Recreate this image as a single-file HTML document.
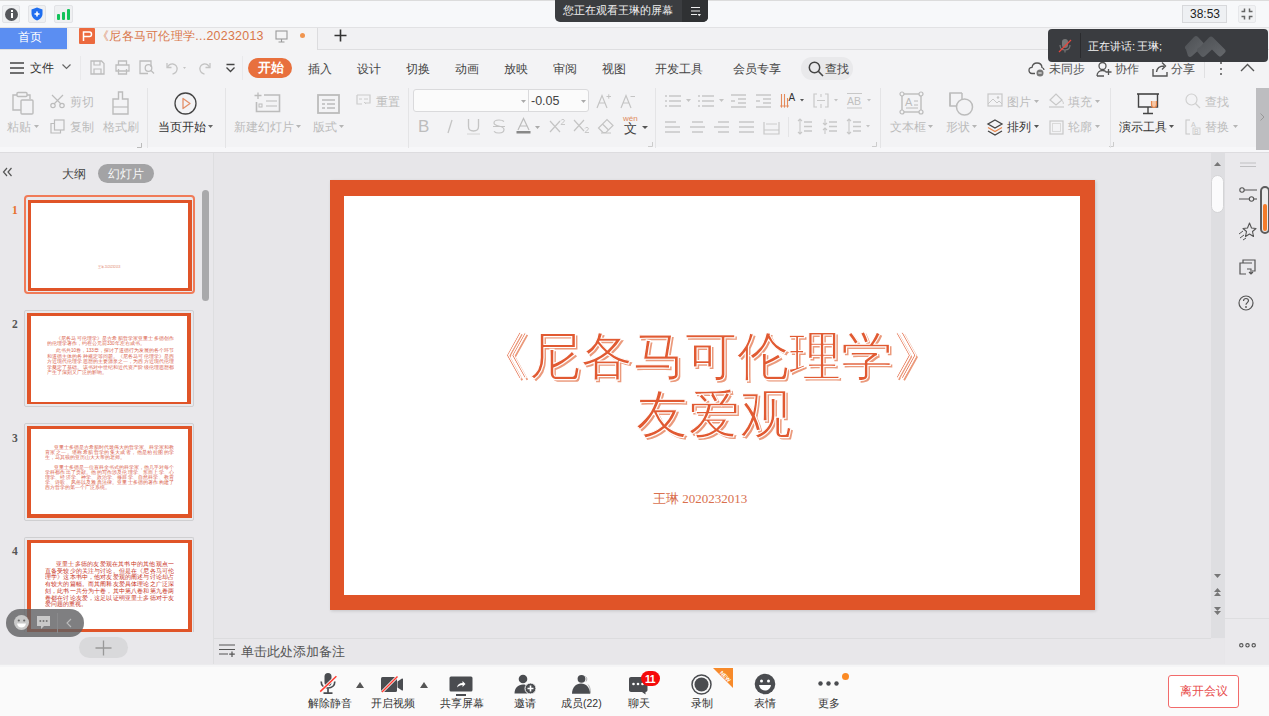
<!DOCTYPE html>
<html><head><meta charset="utf-8">
<style>
*{box-sizing:border-box;margin:0;padding:0}
html,body{width:1269px;height:716px;overflow:hidden;background:#e7e6e9;font-family:"Liberation Sans",sans-serif;color:#333}
.a{position:absolute}
.t{position:absolute;white-space:nowrap;line-height:1}
svg{position:absolute;overflow:visible}
</style></head><body>

<!-- top bar -->
<div class="a" style="left:0;top:0;width:1269px;height:27px;background:#f7f8fa;border-top:1px solid #dcdcdc"></div>
<div class="a" style="left:2px;top:5px;width:18px;height:18px;border:1px solid #e2e3e6;background:#eff0f2;border-radius:2px"></div>
<div class="a" style="left:5px;top:7.5px;width:13px;height:13px;background:#55575b;border-radius:50%"></div>
<div class="a" style="left:10.6px;top:9.5px;width:2px;height:2px;background:#fff"></div>
<div class="a" style="left:10.6px;top:12.5px;width:2px;height:5px;background:#fff"></div>
<div class="a" style="left:28px;top:5px;width:18px;height:18px;border:1px solid #e2e3e6;background:#eff0f2;border-radius:2px"></div>
<svg style="left:31px;top:7px" width="12" height="14" viewBox="0 0 12 14"><path d="M6 0.5 L11.5 2.5 V7 C11.5 10 9 12.3 6 13.5 C3 12.3 0.5 10 0.5 7 V2.5 Z" fill="#1f6ef0"/><path d="M6 4.5V9.5M3.5 7H8.5" stroke="#fff" stroke-width="1.6"/></svg>
<div class="a" style="left:54px;top:5px;width:19px;height:18px;border:1px solid #e2e3e6;background:#eff0f2;border-radius:2px"></div>
<div class="a" style="left:57px;top:14px;width:2.6px;height:5.5px;background:#12c25a;border-radius:1px"></div>
<div class="a" style="left:62px;top:11.5px;width:2.6px;height:8px;background:#12c25a;border-radius:1px"></div>
<div class="a" style="left:67px;top:9px;width:2.6px;height:10.5px;background:#12c25a;border-radius:1px"></div>

<!-- screen pill -->
<div class="a" style="left:555px;top:0;width:153px;height:22px;background:#3b3d40;border-radius:0 0 5px 5px"></div>
<div class="a" style="left:682px;top:0;width:26px;height:22px;background:#2f3133;border-radius:0 0 5px 0"></div>
<div class="t" style="left:563px;top:5px;font-size:11.4px;color:#f2f2f2">您正在观看王琳的屏幕</div>
<svg style="left:690px;top:6px" width="12" height="11"><path d="M1 1.5H10M1 5H10M1 8.5H7" stroke="#eee" stroke-width="1.2"/><path d="M7.5 8 L11 8 L9.25 10.2Z" fill="#eee"/></svg>

<!-- timer -->
<div class="a" style="left:1182px;top:5px;width:45px;height:18px;border:1px solid #d7d8db;background:#eef0f3"></div>
<div class="t" style="left:1190px;top:8px;font-size:12px;color:#222">38:53</div>
<div class="a" style="left:1238px;top:5px;width:18px;height:18px;border:1px solid #e6e7ea;background:#f1f2f4;border-radius:2px"></div>
<svg style="left:1240px;top:7px" width="14" height="14"><path d="M4.5 1.5V4.5H1.5M9.5 1.5V4.5H12.5M4.5 12.5V9.5H1.5M9.5 12.5V9.5H12.5" stroke="#666" stroke-width="1.5" fill="none"/></svg>

<!-- tab bar -->
<div class="a" style="left:0;top:27px;width:1269px;height:23px;background:#f1f1f3;border-top:1px solid #e2e2e4;border-bottom:1px solid #dedee0"></div>
<div class="a" style="left:0;top:28px;width:67px;height:21px;background:#5b8ef2"></div>
<div class="t" style="left:18px;top:31px;font-size:12px;color:#fff">首页</div>
<div class="a" style="left:67px;top:28px;width:251px;height:22px;background:#f4f4f5;border-left:2px solid #f0f0f2;border-right:1px solid #dcdcde"></div>
<div class="a" style="left:79px;top:28px;width:16px;height:16px;background:#ec6a3e;border-radius:1px"></div>
<svg style="left:79px;top:28px" width="16" height="16"><path d="M4.5 13V4H10.5C12 4 12.5 5 12.5 6.3C12.5 7.6 12 8.6 10.5 8.6H4.5" stroke="#fff" stroke-width="1.5" fill="none"/></svg>
<div class="t" style="left:97px;top:30px;font-size:12.4px;letter-spacing:0.28px;color:#d9774a">《尼各马可伦理学...20232013</div>
<svg style="left:275px;top:30px" width="13" height="13"><rect x="1" y="1" width="11" height="8" fill="none" stroke="#9a9a9a" stroke-width="1.1"/><path d="M6.5 9V12M3.5 12H9.5" stroke="#9a9a9a" stroke-width="1.1"/></svg>
<div class="a" style="left:300px;top:33px;width:5px;height:5px;background:#f0954f;border-radius:50%"></div>
<svg style="left:334px;top:29px" width="13" height="13"><path d="M6.5 0.5V12.5M0.5 6.5H12.5" stroke="#333" stroke-width="1.6"/></svg>

<!-- menu + ribbon -->
<div class="a" style="left:0;top:50px;width:1269px;height:97px;background:#f3f3f5"></div><div class="a" style="left:0;top:147px;width:1269px;height:5px;background:#f7f7f9"></div><div class="a" style="left:0;top:152px;width:1269px;height:1px;background:#dddcdf"></div>
<svg style="left:10px;top:62px" width="14" height="12"><path d="M0 1H14M0 6H14M0 11H14" stroke="#444" stroke-width="1.4"/></svg>
<div class="t" style="left:30px;top:62px;font-size:12px;color:#333">文件</div>
<svg style="left:62px;top:64px" width="9" height="6"><path d="M0.5 0.5L4.5 4.5L8.5 0.5" stroke="#666" stroke-width="1.2" fill="none"/></svg>
<div class="a" style="left:80px;top:56px;width:1px;height:24px;background:#e9e9eb"></div>
<svg style="left:90px;top:60px" width="15" height="15"><path d="M1 1H11.5L14 3.5V14H1Z" fill="none" stroke="#bdbdbd" stroke-width="1.3"/><path d="M4 1V5H10V1M4 14V9H11V14" fill="none" stroke="#bdbdbd" stroke-width="1.2"/></svg>
<svg style="left:115px;top:60px" width="15" height="15"><path d="M3.5 4.5V1H11.5V4.5M1 5H14V11H1ZM3.5 9V14H11.5V9" fill="none" stroke="#bdbdbd" stroke-width="1.3"/></svg>
<svg style="left:139px;top:60px" width="16" height="15"><path d="M9 13.5H1V1H12V7" fill="none" stroke="#bdbdbd" stroke-width="1.3"/><circle cx="9.5" cy="8" r="3.3" fill="none" stroke="#bdbdbd" stroke-width="1.3"/><path d="M12 10.5L15 13.5" stroke="#bdbdbd" stroke-width="1.3"/></svg>
<svg style="left:165px;top:61px" width="22" height="14"><path d="M2 2V6.5H6.5" fill="none" stroke="#c4c4c4" stroke-width="1.3"/><path d="M2.5 6C3.8 3.8 5.8 2.8 7.8 3C10.8 3.3 12.5 5.8 12 8.7C11.6 11 10 12.5 7.5 13.2" fill="none" stroke="#c4c4c4" stroke-width="1.3"/><path d="M18 6L21 6L19.5 8Z" fill="#c4c4c4"/></svg>
<svg style="left:198px;top:61px" width="14" height="14"><path d="M12 2V6.5H7.5" fill="none" stroke="#c4c4c4" stroke-width="1.3"/><path d="M11.5 6C10.2 3.8 8.2 2.8 6.2 3C3.2 3.3 1.5 5.8 2 8.7C2.4 11 4 12.5 6.5 13.2" fill="none" stroke="#c4c4c4" stroke-width="1.3"/></svg>
<svg style="left:226px;top:64px" width="9" height="9"><path d="M0.5 0.5H8.5M0.5 3.5L4.5 7.5L8.5 3.5" fill="none" stroke="#444" stroke-width="1.3"/></svg>
<div class="a" style="left:242px;top:56px;width:1px;height:24px;background:#e9e9eb"></div>
<div class="a" style="left:248px;top:58px;width:44px;height:20px;background:#e8703d;border-radius:10px"></div>
<div class="t" style="left:258px;top:62px;font-size:12.5px;color:#fff;font-weight:bold">开始</div>
<div class="t" style="left:308px;top:63px;font-size:12px;color:#444">插入</div>
<div class="t" style="left:357px;top:63px;font-size:12px;color:#444">设计</div>
<div class="t" style="left:406px;top:63px;font-size:12px;color:#444">切换</div>
<div class="t" style="left:455px;top:63px;font-size:12px;color:#444">动画</div>
<div class="t" style="left:504px;top:63px;font-size:12px;color:#444">放映</div>
<div class="t" style="left:553px;top:63px;font-size:12px;color:#444">审阅</div>
<div class="t" style="left:602px;top:63px;font-size:12px;color:#444">视图</div>
<div class="t" style="left:655px;top:63px;font-size:12px;color:#444">开发工具</div>
<div class="t" style="left:733px;top:63px;font-size:12px;color:#444">会员专享</div>
<div class="a" style="left:801px;top:57px;width:52px;height:23px;background:#e9e9eb;border-radius:11px"></div>
<svg style="left:808px;top:61px" width="16" height="16"><circle cx="6.5" cy="6.5" r="5.2" fill="none" stroke="#444" stroke-width="1.5"/><path d="M10.3 10.3L15 15" stroke="#444" stroke-width="1.6"/></svg>
<div class="t" style="left:825px;top:63px;font-size:12px;color:#444">查找</div>

<!-- ribbon -->
<!-- paste -->
<svg style="left:11px;top:91px" width="23" height="24"><path d="M6 4H2V19H10" fill="none" stroke="#bcbcbc" stroke-width="1.4"/><path d="M16 4H19V8" fill="none" stroke="#bcbcbc" stroke-width="1.4"/><rect x="6" y="1.5" width="10" height="4" rx="1" fill="none" stroke="#bcbcbc" stroke-width="1.4"/><rect x="10" y="9" width="12" height="14" rx="1" fill="none" stroke="#bcbcbc" stroke-width="1.4"/></svg>
<div class="t" style="left:7px;top:121px;font-size:12px;color:#bcbcbc">粘贴</div>
<svg style="left:34px;top:125px" width="5" height="3"><path d="M0 0H5L2.5 3Z" fill="#b5b5b5"/></svg>
<svg style="left:50px;top:94px" width="15" height="14"><path d="M2 1L11 10M13 1L4 10" stroke="#bcbcbc" stroke-width="1.2"/><circle cx="3" cy="11.5" r="2.2" fill="none" stroke="#bcbcbc" stroke-width="1.2"/><circle cx="12" cy="11.5" r="2.2" fill="none" stroke="#bcbcbc" stroke-width="1.2"/></svg>
<div class="t" style="left:70px;top:96px;font-size:12px;color:#bcbcbc">剪切</div>
<svg style="left:50px;top:119px" width="15" height="15"><path d="M4.5 4.5H1V14H10.5V11" fill="none" stroke="#bcbcbc" stroke-width="1.2"/><rect x="4.5" y="1" width="9.5" height="10" fill="none" stroke="#bcbcbc" stroke-width="1.2"/></svg>
<div class="t" style="left:70px;top:121px;font-size:12px;color:#bcbcbc">复制</div>
<svg style="left:111px;top:91px" width="19" height="24"><path d="M7.5 1H11.5V8H17V23H2V8H7.5Z" fill="none" stroke="#bcbcbc" stroke-width="1.4"/><path d="M2 16H17" stroke="#bcbcbc" stroke-width="1.2"/></svg>
<div class="t" style="left:103px;top:121px;font-size:12px;color:#bcbcbc">格式刷</div>
<svg style="left:137px;top:143px" width="5" height="5"><path d="M4.5 0V4.5H0" fill="none" stroke="#bbb" stroke-width="1"/></svg>
<div class="a" style="left:147px;top:88px;width:1px;height:60px;background:#e4e4e6"></div>
<svg style="left:174px;top:92px" width="23" height="23"><circle cx="11.5" cy="11.5" r="10.5" fill="none" stroke="#444" stroke-width="1.3"/><path d="M9 6.5L16 11.5L9 16.5Z" fill="none" stroke="#e39069" stroke-width="1.3" stroke-linejoin="round"/></svg>
<div class="t" style="left:158px;top:121px;font-size:12px;color:#333">当页开始</div>
<svg style="left:208px;top:125px" width="5" height="3"><path d="M0 0H5L2.5 3Z" fill="#666"/></svg>
<div class="a" style="left:225px;top:88px;width:1px;height:60px;background:#e4e4e6"></div>
<!-- new slide -->
<svg style="left:254px;top:92px" width="27" height="21"><path d="M4 0.5V7M0.5 3.5H7.5" stroke="#bcbcbc" stroke-width="1.3"/><path d="M10 3H25.5V19.5H2.5V10" fill="none" stroke="#bcbcbc" stroke-width="1.6"/><rect x="5" y="12" width="3" height="3" fill="none" stroke="#bcbcbc" stroke-width="1"/><path d="M12 9H23M12 14H23" stroke="#bcbcbc" stroke-width="1.2"/></svg>
<div class="t" style="left:234px;top:121px;font-size:12px;color:#bcbcbc">新建幻灯片</div>
<svg style="left:296px;top:125px" width="5" height="3"><path d="M0 0H5L2.5 3Z" fill="#b5b5b5"/></svg>
<svg style="left:317px;top:94px" width="23" height="20"><rect x="1" y="1" width="21" height="18" fill="none" stroke="#bcbcbc" stroke-width="1.8"/><path d="M5 6H18M5 10H8M10 10H18M5 14H8M10 14H18" stroke="#bcbcbc" stroke-width="1.3"/></svg>
<div class="t" style="left:313px;top:121px;font-size:12px;color:#bcbcbc">版式</div>
<svg style="left:339px;top:125px" width="5" height="3"><path d="M0 0H5L2.5 3Z" fill="#b5b5b5"/></svg>
<svg style="left:356px;top:94px" width="15" height="13"><path d="M1 1H14V9H9" fill="none" stroke="#ccc" stroke-width="1.2"/><path d="M1 1V10H6" fill="none" stroke="#ccc" stroke-width="1.2"/><path d="M3 5H6M8 5H12M8 8L10 10" stroke="#ccc" stroke-width="1"/></svg>
<div class="t" style="left:376px;top:96px;font-size:12px;color:#bcbcbc">重置</div>
<div class="a" style="left:408px;top:88px;width:1px;height:60px;background:#e4e4e6"></div>
<!-- font boxes -->
<div class="a" style="left:413px;top:89px;width:176px;height:23px;background:#fbfbfb;border:1px solid #dadadc;border-radius:3px"></div>
<div class="a" style="left:528px;top:90px;width:1px;height:21px;background:#dadadc"></div>
<svg style="left:521px;top:100px" width="5" height="3"><path d="M0 0H5L2.5 3Z" fill="#aaa"/></svg>
<svg style="left:581px;top:100px" width="5" height="3"><path d="M0 0H5L2.5 3Z" fill="#aaa"/></svg>
<div class="t" style="left:531px;top:95px;font-size:12.5px;color:#444">-0.05</div>
<svg style="left:596px;top:93px" width="16" height="16"><path d="M1 15L6 2.5L11 15M3 10H9" fill="none" stroke="#c4c4c4" stroke-width="1.2"/><path d="M10.5 3.5H15M12.75 1.3V5.7" stroke="#c4c4c4" stroke-width="1"/></svg>
<svg style="left:620px;top:93px" width="16" height="16"><path d="M1 15L6 2.5L11 15M3 10H9" fill="none" stroke="#c4c4c4" stroke-width="1.2"/><path d="M10.5 3.5H15" stroke="#c4c4c4" stroke-width="1"/></svg>
<div class="t" style="left:418px;top:118px;font-size:17px;color:#bdbdbd">B</div>
<svg style="left:446px;top:119px" width="8" height="15"><path d="M6 1L2 14" stroke="#c4c4c4" stroke-width="1.3"/></svg>
<svg style="left:466px;top:118px" width="15" height="17"><path d="M2.5 1V8.5C2.5 11.5 4.5 13 7.5 13C10.5 13 12.5 11.5 12.5 8.5V1" fill="none" stroke="#c4c4c4" stroke-width="1.3"/><path d="M1 16H14" stroke="#d4d4d4" stroke-width="1"/></svg>
<svg style="left:492px;top:119px" width="14" height="15"><path d="M12 2.5C11 1.5 9.5 1 7 1C4 1 2 2 2 4C2 8 12 6 12 10.5C12 12.5 10 14 7 14C4.5 14 3 13.3 2 12.3M1 7.5H13" fill="none" stroke="#c4c4c4" stroke-width="1.2"/></svg>
<svg style="left:516px;top:117px" width="15" height="17"><path d="M2 13L7.5 1.5L13 13M4 9H11" fill="none" stroke="#bcbcbc" stroke-width="1.2"/><rect x="0.5" y="14" width="14" height="2.5" fill="#888"/></svg>
<svg style="left:535px;top:126px" width="5" height="3"><path d="M0 0H5L2.5 3Z" fill="#aaa"/></svg>
<svg style="left:549px;top:118px" width="17" height="16"><path d="M1 3L11 14M11 3L1 14" stroke="#c4c4c4" stroke-width="1.2"/><path d="M12 2.5C12.5 1 15.5 1 15.5 2.8C15.5 4 12 5.5 12 6.5H16" fill="none" stroke="#c4c4c4" stroke-width="0.9"/></svg>
<svg style="left:573px;top:118px" width="17" height="16"><path d="M1 2L11 13M11 2L1 13" stroke="#c4c4c4" stroke-width="1.2"/><path d="M12 10.5C12.5 9 15.5 9 15.5 10.8C15.5 12 12 13.5 12 14.5H16" fill="none" stroke="#c4c4c4" stroke-width="0.9"/></svg>
<svg style="left:597px;top:117px" width="18" height="17"><path d="M6 15.5L1.5 11L10 2.5L16 8.5L9 15.5Z M5.5 7L11 12.5" fill="none" stroke="#c4c4c4" stroke-width="1.2"/><path d="M4 16H14" stroke="#c4c4c4" stroke-width="1"/></svg>
<div class="t" style="left:623px;top:115px;font-size:8px;color:#e08a5a">wén</div>
<div class="t" style="left:624px;top:122px;font-size:13px;color:#444">文</div>
<svg style="left:642px;top:126px" width="6" height="3"><path d="M0 0H6L3 3Z" fill="#555"/></svg>
<svg style="left:648px;top:142px" width="5" height="5"><path d="M4.5 0V4.5H0" fill="none" stroke="#ccc" stroke-width="1"/></svg>
<div class="a" style="left:655px;top:88px;width:1px;height:60px;background:#e4e4e6"></div>
<svg style="left:665px;top:93px" width="17" height="16"><path d="M0 3H2M4 3H16M0 8H2M4 8H16M0 13H2M4 13H16" stroke="#c8c8c8" stroke-width="1.3"/></svg><svg style="left:686px;top:99px" width="5" height="3"><path d="M0 0H5L2.5 3Z" fill="#c4c4c4"/></svg><svg style="left:698px;top:93px" width="17" height="16"><path d="M0 3H2M4 3H16M0 8H2M4 8H16M0 13H2M4 13H16" stroke="#c8c8c8" stroke-width="1.3"/></svg><svg style="left:719px;top:99px" width="5" height="3"><path d="M0 0H5L2.5 3Z" fill="#c4c4c4"/></svg><svg style="left:731px;top:93px" width="17" height="16"><path d="M0 2H15M7 6H15M7 10H15M0 14H15M0 8H4" stroke="#c8c8c8" stroke-width="1.3"/></svg><svg style="left:756px;top:93px" width="17" height="16"><path d="M0 2H15M7 6H15M7 10H15M0 14H15M0 8H4" stroke="#c8c8c8" stroke-width="1.3"/></svg><svg style="left:780px;top:92px" width="24" height="18"><path d="M1.5 2V15M4.5 2V15M7.5 6V15" stroke="#e58a5a" stroke-width="1.1"/><path d="M0 13.5L1.5 16L3 13.5M3 13.5L4.5 16L6 13.5M6 13.5L7.5 16L9 13.5" fill="#e58a5a"/><text x="8.5" y="9" font-size="10" font-family="Liberation Sans" fill="#333">A</text><path d="M20 7H24L22 9.5Z" fill="#555"/></svg>
<svg style="left:813px;top:92px" width="27" height="18"><path d="M4 2H1V15H4M12 2H15V15H12" fill="none" stroke="#c8c8c8" stroke-width="1.2"/><path d="M4 8.5H12M8 2V5M8 12V16" stroke="#c8c8c8" stroke-width="1.1"/><path d="M21 7H25L23 9.5Z" fill="#c4c4c4"/></svg>
<svg style="left:846px;top:92px" width="27" height="18"><path d="M1 1.5H16M1 16H16" stroke="#c8c8c8" stroke-width="1.1"/><text x="1" y="13" font-size="10.5" font-family="Liberation Sans" fill="#c0c0c0">AB</text><path d="M21 7H25L23 9.5Z" fill="#c4c4c4"/></svg>
<svg style="left:665px;top:119px" width="17" height="16"><path d="M0 3H11M0 8H15M0 13H15" stroke="#c8c8c8" stroke-width="1.3"/></svg><svg style="left:690px;top:119px" width="17" height="16"><path d="M2 3H13M0 8H15M2 13H13" stroke="#c8c8c8" stroke-width="1.3"/></svg><svg style="left:714px;top:119px" width="17" height="16"><path d="M4 3H15M0 8H15M4 13H15" stroke="#c8c8c8" stroke-width="1.3"/></svg><svg style="left:739px;top:119px" width="17" height="16"><path d="M0 3H15M0 8H15M0 13H15" stroke="#c8c8c8" stroke-width="1.3"/></svg><svg style="left:763px;top:119px" width="17" height="16"><path d="M1 3V15H16V3M1 11H16" fill="none" stroke="#c8c8c8" stroke-width="1.2"/><path d="M3 5H14" stroke="#c8c8c8" stroke-width="0.9"/></svg><div class="a" style="left:788px;top:117px;width:1px;height:20px;background:#e4e4e6"></div><svg style="left:797px;top:118px" width="16" height="17"><path d="M3 1V16M1 3L3 1L5 3M1 14L3 16L5 14" fill="none" stroke="#c8c8c8" stroke-width="1.1"/><path d="M7 4H15M7 8.5H15M7 13H15" stroke="#c8c8c8" stroke-width="1.3"/></svg><svg style="left:822px;top:118px" width="16" height="17"><path d="M3 1V7M1 5L3 7L5 5M3 10V16M1 12L3 10L5 12" fill="none" stroke="#c8c8c8" stroke-width="1.1"/><path d="M7 4H15M7 8.5H15M7 13H15" stroke="#c8c8c8" stroke-width="1.3"/></svg><svg style="left:846px;top:118px" width="28" height="17"><path d="M3 1V16M1 3L3 1L5 3M1 14L3 16L5 14" fill="none" stroke="#c8c8c8" stroke-width="1.1"/><path d="M7 4H15M7 8.5H15M7 13H15" stroke="#c8c8c8" stroke-width="1.3"/><path d="M20 7H24L22 9.5Z" fill="#c4c4c4"/></svg><svg style="left:872px;top:142px" width="5" height="5"><path d="M4.5 0V4.5H0" fill="none" stroke="#ccc" stroke-width="1"/></svg><div class="a" style="left:880px;top:88px;width:1px;height:60px;background:#e4e4e6"></div>
<svg style="left:899px;top:91px" width="25" height="24"><rect x="3" y="3" width="19" height="18" fill="none" stroke="#bcbcbc" stroke-width="1.4"/><circle cx="3" cy="3" r="2" fill="#f4f4f5" stroke="#bcbcbc" stroke-width="1.2"/><circle cx="22" cy="3" r="2" fill="#f4f4f5" stroke="#bcbcbc" stroke-width="1.2"/><circle cx="3" cy="21" r="2" fill="#f4f4f5" stroke="#bcbcbc" stroke-width="1.2"/><circle cx="22" cy="21" r="2" fill="#f4f4f5" stroke="#bcbcbc" stroke-width="1.2"/><text x="6" y="15" font-size="11" font-family="Liberation Sans" fill="#bcbcbc">A</text><path d="M15 10H19M15 14H19M7 17H19" stroke="#bcbcbc" stroke-width="1"/></svg>
<div class="t" style="left:890px;top:121px;font-size:12px;color:#bcbcbc">文本框</div>
<svg style="left:928px;top:125px" width="5" height="3"><path d="M0 0H5L2.5 3Z" fill="#b5b5b5"/></svg>
<svg style="left:948px;top:91px" width="26" height="25"><path d="M14 2H2V15H8" fill="none" stroke="#bcbcbc" stroke-width="1.5"/><path d="M2 2V15" stroke="#bcbcbc" stroke-width="1.5"/><path d="M14 2V8" stroke="#bcbcbc" stroke-width="1.5"/><circle cx="16.5" cy="16" r="8" fill="none" stroke="#bcbcbc" stroke-width="1.5"/></svg>
<div class="t" style="left:946px;top:121px;font-size:12px;color:#bcbcbc">形状</div>
<svg style="left:972px;top:125px" width="5" height="3"><path d="M0 0H5L2.5 3Z" fill="#b5b5b5"/></svg>
<svg style="left:987px;top:93px" width="16" height="14"><rect x="1" y="1" width="14" height="12" fill="none" stroke="#c8c8c8" stroke-width="1.2"/><path d="M1 11L6 6L10 10L12 8L15 11" fill="none" stroke="#c8c8c8" stroke-width="1"/><circle cx="11" cy="4.5" r="1.2" fill="#c8c8c8"/></svg>
<div class="t" style="left:1007px;top:96px;font-size:12px;color:#bcbcbc">图片</div>
<svg style="left:1034px;top:100px" width="5" height="3"><path d="M0 0H5L2.5 3Z" fill="#b5b5b5"/></svg>
<svg style="left:1048px;top:92px" width="17" height="16"><path d="M2 8L8 2L14 8L8 13Z" fill="none" stroke="#c8c8c8" stroke-width="1.2"/><path d="M1 15H16" stroke="#c8c8c8" stroke-width="1.2"/><path d="M14 8.5C15 10 16 11 15 12" stroke="#c8c8c8" stroke-width="1" fill="none"/></svg>
<div class="t" style="left:1068px;top:96px;font-size:12px;color:#bcbcbc">填充</div>
<svg style="left:1095px;top:100px" width="5" height="3"><path d="M0 0H5L2.5 3Z" fill="#b5b5b5"/></svg>
<svg style="left:987px;top:119px" width="16" height="17"><path d="M8 1L15 5L8 9L1 5Z" fill="none" stroke="#444" stroke-width="1.3"/><path d="M1 8.5L8 12.5L15 8.5" fill="none" stroke="#e8884e" stroke-width="1.3"/><path d="M1 12L8 16L15 12" fill="none" stroke="#444" stroke-width="1.3"/></svg>
<div class="t" style="left:1007px;top:121px;font-size:12px;color:#333">排列</div>
<svg style="left:1034px;top:125px" width="5" height="3"><path d="M0 0H5L2.5 3Z" fill="#555"/></svg>
<svg style="left:1049px;top:120px" width="15" height="15"><rect x="1" y="1" width="13" height="13" fill="none" stroke="#c8c8c8" stroke-width="1.2"/><rect x="3.5" y="3.5" width="8" height="8" fill="none" stroke="#d8d8d8" stroke-width="0.9"/></svg>
<div class="t" style="left:1068px;top:121px;font-size:12px;color:#bcbcbc">轮廓</div>
<svg style="left:1095px;top:125px" width="5" height="3"><path d="M0 0H5L2.5 3Z" fill="#b5b5b5"/></svg>
<svg style="left:1109px;top:142px" width="5" height="5"><path d="M4.5 0V4.5H0" fill="none" stroke="#ccc" stroke-width="1"/></svg>
<div class="a" style="left:1110px;top:88px;width:1px;height:60px;background:#e4e4e6"></div>
<svg style="left:1136px;top:92px" width="24" height="23"><path d="M1 2H23" stroke="#444" stroke-width="1.6"/><path d="M2.5 2V15H21.5V2" fill="none" stroke="#444" stroke-width="1.4"/><path d="M12 15V21M7 21.5H17" stroke="#444" stroke-width="1.4"/><path d="M15.5 9V12.5C15.5 14.5 16.5 15.5 18 15.5C19.5 15.5 20.5 14.5 20.5 12.5V9" fill="#f6c7a6" stroke="#e8884e" stroke-width="1.2"/></svg>
<div class="t" style="left:1119px;top:121px;font-size:12px;color:#333">演示工具</div>
<svg style="left:1169px;top:125px" width="5" height="3"><path d="M0 0H5L2.5 3Z" fill="#555"/></svg>
<svg style="left:1185px;top:93px" width="16" height="16"><circle cx="6.5" cy="6.5" r="5.5" fill="none" stroke="#d0d0d0" stroke-width="1.2"/><path d="M10.5 10.5L15 15" stroke="#d0d0d0" stroke-width="1.3"/></svg>
<div class="t" style="left:1205px;top:96px;font-size:12px;color:#c0c0c0">查找</div>
<svg style="left:1185px;top:119px" width="16" height="16"><path d="M5 1H1V15H5" fill="none" stroke="#c8c8c8" stroke-width="1.1"/><text x="6" y="8" font-size="7" font-family="Liberation Sans" fill="#c8c8c8">A</text><text x="9" y="15" font-size="7" font-family="Liberation Sans" fill="#c8c8c8">B</text><rect x="8" y="9" width="7" height="6.5" fill="none" stroke="#c8c8c8" stroke-width="0.8"/></svg>
<div class="t" style="left:1205px;top:121px;font-size:12px;color:#bcbcbc">替换</div>
<svg style="left:1233px;top:125px" width="5" height="3"><path d="M0 0H5L2.5 3Z" fill="#b5b5b5"/></svg>
<div class="a" style="left:1256px;top:88px;width:13px;height:62px;background:#bdbdc0"></div>
<svg style="left:1260px;top:113px" width="5" height="8"><path d="M0.5 0.5L4 4L0.5 7.5" fill="none" stroke="#999" stroke-width="1"/></svg>

<!-- right menu row items -->
<svg style="left:1028px;top:61px" width="17" height="16"><path d="M7 12.5H4C2 12.5 1 11 1 9.3C1 7.5 2.3 6.3 4 6.3C4.5 3.5 6.5 2 9 2C11.8 2 13.8 4 14 6.5C15.3 7 16 8 16 9" fill="none" stroke="#555" stroke-width="1.3"/><circle cx="12" cy="12" r="3.5" fill="#777"/><path d="M10.3 12H13.7" stroke="#fff" stroke-width="1"/></svg>
<div class="t" style="left:1049px;top:63px;font-size:12px;color:#555">未同步</div>
<svg style="left:1096px;top:61px" width="16" height="16"><circle cx="6.5" cy="5" r="3.5" fill="none" stroke="#555" stroke-width="1.3"/><path d="M1 15C1 11.5 3.5 9.5 6.5 9.5C8 9.5 9 10 10 10.5M1 15H8" fill="none" stroke="#555" stroke-width="1.3"/><path d="M12.5 8V14M9.5 11H15.5" stroke="#555" stroke-width="1.3"/></svg>
<div class="t" style="left:1115px;top:63px;font-size:12px;color:#555">协作</div>
<svg style="left:1152px;top:61px" width="16" height="16"><path d="M1 8V15H15V11" fill="none" stroke="#555" stroke-width="1.4"/><path d="M4.5 11C5 7 8 5 12 5M10 1.5L13.5 5L10 8.5" fill="none" stroke="#555" stroke-width="1.4"/></svg>
<div class="t" style="left:1171px;top:63px;font-size:12px;color:#555">分享</div>
<div class="a" style="left:1204px;top:60px;width:1px;height:18px;background:#e0e0e2"></div>
<div class="a" style="left:1220px;top:62px;width:2.4px;height:2.4px;background:#555;border-radius:50%"></div>
<div class="a" style="left:1220px;top:67.5px;width:2.4px;height:2.4px;background:#555;border-radius:50%"></div>
<div class="a" style="left:1220px;top:73px;width:2.4px;height:2.4px;background:#555;border-radius:50%"></div>
<svg style="left:1240px;top:63px" width="15" height="9"><path d="M1 8L7.5 1.5L14 8" fill="none" stroke="#555" stroke-width="1.4"/></svg>

<!-- speaker overlay -->
<div class="a" style="left:1048px;top:29px;width:220px;height:33px;background:#3a3c40;border-radius:4px"></div>
<svg style="left:1058px;top:38px" width="14" height="15"><rect x="4" y="1" width="6" height="9" rx="3" fill="#777"/><path d="M2 7C2 10 4 12 7 12C10 12 12 10 12 7M7 12V14.5" fill="none" stroke="#777" stroke-width="1.2"/><path d="M1 14L13 2" stroke="#e8463c" stroke-width="1.3"/></svg>
<div class="a" style="left:1080px;top:33px;width:1px;height:25px;background:#2a2b2e"></div>
<div class="t" style="left:1088px;top:41px;font-size:11px;color:#f4f4f4">正在讲话<span style="letter-spacing:-1px">:</span> 王琳;</div>
<svg style="left:1184px;top:34px" width="43" height="24"><defs><linearGradient id="lg1" x1="0" y1="0" x2="1" y2="1"><stop offset="0" stop-color="#4c4f53"/><stop offset="1" stop-color="#65686c"/></linearGradient></defs><path d="M2 15.5C0.5 14 0.5 13 2 11.5L10 3C11.5 1.5 12.5 1.5 14 3L20 9.5L13 17.5L8 22C6.5 23.2 5.5 23.2 4 22Z" fill="url(#lg1)"/><path d="M16 13L25 3.5C26.5 2 27.5 2 29 3.5L40.5 15C42 16.5 42 17.5 40.5 19L38 21.5C36.5 23 35.5 23 34 21.5L28 15.5L21 22C19.5 23.2 18.5 23.2 17 22L14 18.5C12.5 17 12.5 15.5 14 14Z" fill="url(#lg1)"/></svg>

<!-- main area -->
<div class="a" style="left:0;top:153px;width:214px;height:511px;background:#e9e8eb;border-right:1px solid #dedee0"></div>
<svg style="left:2px;top:167px" width="11" height="10"><path d="M5 1L1.5 5L5 9M9.5 1L6 5L9.5 9" fill="none" stroke="#555" stroke-width="1.2"/></svg>
<div class="t" style="left:62px;top:168px;font-size:12px;color:#444">大纲</div>
<div class="a" style="left:98px;top:164px;width:56px;height:19px;background:#a3a3a5;border-radius:10px"></div>
<div class="t" style="left:108px;top:168px;font-size:12px;color:#f6f6f6">幻灯片</div>
<div class="a" style="left:202px;top:190px;width:7px;height:111px;background:#a9a9ab;border-radius:4px"></div>

<div class="t" style="left:12px;top:205px;font-size:11.5px;color:#e8702f;font-weight:bold;font-family:'Liberation Serif',serif">1</div>
<div class="a" style="left:23.5px;top:195px;width:171px;height:99px;border:2.5px solid #f07b58;border-radius:4px"></div>
<div class="a" style="left:27.5px;top:199.5px;width:164px;height:91.5px;background:#e05428"></div>
<div class="a" style="left:31px;top:203px;width:157px;height:85px;background:#fff"></div>
<div class="t" style="left:98px;top:265.5px;font-size:2.8px;color:#e08066">王琳 2020232013</div>

<div class="t" style="left:12px;top:319px;font-size:11.5px;color:#555;font-weight:bold;font-family:'Liberation Serif',serif">2</div>
<div class="a" style="left:24px;top:310px;width:170px;height:97px;border:1px solid #cfcfd1;border-radius:2px"></div>
<div class="a" style="left:27px;top:313px;width:164px;height:91px;background:#e05428"></div>
<div class="a" style="left:31px;top:316px;width:156px;height:86px;background:#fff"></div>
<div class="a" style="left:47px;top:336px;width:127px;overflow:hidden;font-size:4.6px;line-height:5.4px;color:#d9604a;text-align:justify;word-break:break-all"><div style="text-indent:9px">《尼各马可伦理学》是古希腊哲学家亚里士多德创作的伦理学著作，约在公元前330年左右成书。</div><div style="text-indent:9px;margin-top:1.5px">此书共10卷，133章，探讨了道德行为发展的各个环节和道德主体的各种规定等问题。《尼各马可伦理学》是西方近现代伦理学思想的主要源泉之一，为西方近现代伦理学奠定了基础。该书对中世纪和近代资产阶级伦理思想都产生了深刻又广泛的影响。</div></div>

<div class="t" style="left:12px;top:433px;font-size:11.5px;color:#555;font-weight:bold;font-family:'Liberation Serif',serif">3</div>
<div class="a" style="left:24px;top:423px;width:170px;height:98px;border:1px solid #cfcfd1;border-radius:2px"></div>
<div class="a" style="left:27px;top:425.5px;width:164.5px;height:92.5px;background:#e05428"></div>
<div class="a" style="left:31px;top:429px;width:157px;height:85px;background:#fff"></div>
<div class="a" style="left:45px;top:445px;width:129px;overflow:hidden;font-size:4.6px;line-height:5.1px;color:#d9604a;text-align:justify;word-break:break-all"><div style="text-indent:9px">亚里士多德是古希腊时代最伟大的哲学家、科学家和教育家之一。堪称希腊哲学的集大成者，他是柏拉图的学生，马其顿的亚历山大大帝的老师。</div><div style="text-indent:9px;margin-top:4.5px">亚里士多德是一位百科全书式的科学家，他几乎对每个学科都作出了贡献。他的写作涉及伦理学、形而上学、心理学、经济学、神学、政治学、修辞学、自然科学、教育学、诗歌、风俗以及雅典法律。亚里士多德的著作构建了西方哲学的第一个广泛系统。</div></div>

<div class="t" style="left:12px;top:546px;font-size:11.5px;color:#555;font-weight:bold;font-family:'Liberation Serif',serif">4</div>
<div class="a" style="left:24px;top:537px;width:170px;height:95px;border:1px solid #cfcfd1;border-bottom:0;border-radius:2px 2px 0 0"></div>
<div class="a" style="left:27px;top:540px;width:164.5px;height:92px;background:#e05428"></div>
<div class="a" style="left:31px;top:543px;width:157px;height:86px;background:#fff"></div>
<div class="a" style="left:45px;top:561px;width:129px;overflow:hidden;font-size:6.2px;line-height:6.7px;color:#c8301a;text-align:justify;word-break:break-all"><div style="text-indent:11px">亚里士多德的友爱观在其书中的其他观点一直备受较少的关注与讨论。但是在《尼各马可伦理学》这本书中，他对友爱观的阐述与讨论却占有较大的篇幅。而其阐释友爱具体理论之广泛深刻，此书一共分为十卷，其中第八卷和第九卷两卷都在讨论友爱，这足以证明亚里士多德对于友爱问题的重视。</div></div>

<!-- floating pill -->
<div class="a" style="left:6px;top:609px;width:78px;height:28px;background:rgba(95,95,97,.8);border-radius:14px"></div>
<svg style="left:13px;top:614px" width="17" height="17"><circle cx="8.5" cy="8.5" r="7.5" fill="#c9c9c9"/><circle cx="5.8" cy="6.5" r="1.1" fill="#6a6a6a"/><circle cx="11.2" cy="6.5" r="1.1" fill="#6a6a6a"/><path d="M4 9.5H13C12.5 12 11 13.5 8.5 13.5C6 13.5 4.5 12 4 9.5Z" fill="#fff"/></svg>
<svg style="left:36px;top:615px" width="15" height="15"><path d="M1 1H14V11H8L5 14V11H1Z" fill="#c9c9c9"/><circle cx="4.3" cy="6" r="1" fill="#777"/><circle cx="7.5" cy="6" r="1" fill="#777"/><circle cx="10.7" cy="6" r="1" fill="#777"/></svg>
<div class="a" style="left:57px;top:613px;width:1px;height:20px;background:#8a8a8c"></div>
<svg style="left:66px;top:618px" width="6" height="10"><path d="M5 1L1 5L5 9" fill="none" stroke="#bbb" stroke-width="1.1"/></svg>
<div class="a" style="left:79px;top:637px;width:49px;height:21px;background:#d9d9db;border-radius:11px"></div>
<svg style="left:95px;top:640px" width="17" height="16"><path d="M8.5 0.5V15.5M0.5 8H16.5" stroke="#999" stroke-width="1.3"/></svg>

<!-- editor bg with scroll -->
<div class="a" style="left:1211px;top:153px;width:14px;height:485px;background:#dedee1"></div>
<svg style="left:1214px;top:162px" width="7" height="4"><path d="M0 4H7L3.5 0Z" fill="#777"/></svg>
<div class="a" style="left:1211px;top:175px;width:13px;height:38px;background:#fbfbfc;border:1px solid #d4d4d6;border-radius:7px"></div>
<svg style="left:1214px;top:574px" width="7" height="4"><path d="M0 0H7L3.5 4Z" fill="#777"/></svg>
<svg style="left:1214px;top:588px" width="7" height="8"><path d="M0 4H7L3.5 0ZM0 8H7L3.5 4Z" fill="#777"/></svg>
<svg style="left:1214px;top:607px" width="7" height="8"><path d="M0 0H7L3.5 4ZM0 4H7L3.5 8Z" fill="#777"/></svg>

<!-- right panel -->
<div class="a" style="left:1225px;top:153px;width:44px;height:511px;background:#eae9ec"></div>
<div class="a" style="left:1224px;top:618px;width:45px;height:1px;background:#dedee0"></div>
<svg style="left:1240px;top:162px" width="16" height="6"><path d="M0 1H16M0 4.5H16" stroke="#c0c0c2" stroke-width="1"/></svg>
<svg style="left:1239px;top:187px" width="19" height="16"><circle cx="3" cy="3" r="2.2" fill="none" stroke="#555" stroke-width="1.1"/><path d="M5.2 3H18M0 12H10.5" stroke="#555" stroke-width="1.1"/><circle cx="12.5" cy="12" r="2.2" fill="none" stroke="#555" stroke-width="1.1"/><path d="M14.7 12H18" stroke="#555" stroke-width="1.1"/></svg>
<div class="a" style="left:1260px;top:185.5px;width:10px;height:48px;background:#ececec;border:2px solid #5c5c5c;border-radius:5px"></div>
<div class="a" style="left:1263px;top:203.5px;width:4px;height:27px;background:#f47b2a;border-radius:2px"></div>
<svg style="left:1238px;top:222px" width="19" height="19"><path d="M11.5 1L13.5 6L18 6.5L14.5 9.5L15.5 14.5L11.5 12L7.5 14.5L8.5 9.5L5 6.5L9.5 6Z" fill="none" stroke="#555" stroke-width="1.1" stroke-linejoin="round"/><path d="M1 12L5 9M2 16L6 13M5 18L8 16" stroke="#555" stroke-width="1"/></svg>
<svg style="left:1239px;top:259px" width="17" height="16"><path d="M4 4V1H16V12H13" fill="none" stroke="#555" stroke-width="1.2"/><path d="M13 4H1V15H7" fill="none" stroke="#555" stroke-width="1.2"/><path d="M8 10H12V15M10 13L12 15L14 13" fill="none" stroke="#555" stroke-width="1.1"/></svg>
<svg style="left:1238px;top:295px" width="16" height="16"><circle cx="8" cy="8" r="7" fill="none" stroke="#555" stroke-width="1.2"/><path d="M5.5 6C5.5 4.3 6.6 3.5 8 3.5C9.5 3.5 10.5 4.5 10.5 5.8C10.5 7.5 8 7.8 8 9.8" fill="none" stroke="#555" stroke-width="1.2"/><circle cx="8" cy="12" r="0.9" fill="#555"/></svg>
<svg style="left:1239px;top:643px" width="17" height="5"><circle cx="2.3" cy="2.3" r="1.7" fill="none" stroke="#555" stroke-width="1.1"/><circle cx="8.5" cy="2.3" r="1.7" fill="none" stroke="#555" stroke-width="1.1"/><circle cx="14.7" cy="2.3" r="1.7" fill="none" stroke="#555" stroke-width="1.1"/></svg>

<!-- notes -->
<div class="a" style="left:214px;top:638px;width:997px;height:1px;background:#dcdcde"></div>
<div class="a" style="left:214px;top:639px;width:1010px;height:25px;background:#e8e7ea"></div>
<svg style="left:219px;top:644px" width="17" height="14"><path d="M0 1H16M0 5.5H16M0 10H9" stroke="#555" stroke-width="1.2"/><path d="M13 7.5V13M10.2 10.2H15.8" stroke="#555" stroke-width="1.2"/></svg>
<div class="t" style="left:241px;top:645px;font-size:13px;color:#555">单击此处添加备注</div>

<!-- slide -->
<div class="a" style="left:330px;top:180px;width:765px;height:430px;background:#e05428;box-shadow:1px 1px 3px rgba(0,0,0,.15)"></div>
<div class="a" style="left:344px;top:196px;width:736px;height:399px;background:#fff"></div>
<div class="t" style="left:477px;top:330px;font-size:52px;color:#e15a32;-webkit-text-stroke:1.1px #fff;text-shadow:2px 2px 0 #eb9a7c">《尼各马可伦理学》</div>
<div class="t" style="left:636px;top:388px;font-size:52px;color:#e15a32;-webkit-text-stroke:1.1px #fff;text-shadow:2px 2px 0 #eb9a7c">友爱观</div>
<div class="t" style="left:653px;top:491.5px;font-size:13px;color:#d9704e;font-family:'Liberation Serif',serif">王琳 2020232013</div>

<!-- bottom toolbar -->
<div class="a" style="left:0;top:664px;width:1269px;height:52px;background:#fafafa"></div><div class="a" style="left:0;top:664px;width:1269px;height:1px;background:#ebebed"></div><div class="a" style="left:0;top:665px;width:1269px;height:2px;background:#f5f5f6"></div>
<svg style="left:318px;top:672px" width="22" height="24"><rect x="6.5" y="1" width="7" height="13" rx="3.5" fill="#4a4c50"/><path d="M3.2 9.5C3.2 13.5 6 16 10 16C14 16 16.8 13.5 16.8 9.5M10 16V20.5M5.5 21.2H14.5" fill="none" stroke="#4a4c50" stroke-width="1.7"/><path d="M2.2 19.6L18.4 4.2" stroke="#fafafa" stroke-width="3"/><path d="M2.2 19.6L18.4 4.2" stroke="#ff3b30" stroke-width="1.5"/></svg>
<div class="t" style="left:308px;top:698px;font-size:10.5px;color:#333">解除静音</div>
<svg style="left:356px;top:682px" width="8" height="6"><path d="M0 6H8L4 0Z" fill="#555"/></svg>
<svg style="left:380px;top:675px" width="24" height="19"><rect x="1" y="2" width="16" height="15" rx="1.5" fill="#4a4c50"/><path d="M17.5 6.5L22 3.5C22.5 3.2 23 3.5 23 4V15C23 15.5 22.5 15.8 22 15.5L17.5 12.5Z" fill="#4a4c50"/><path d="M2 17L17.5 1.5" stroke="#fafafa" stroke-width="3"/><path d="M2 17L17.5 1.5" stroke="#ff3b30" stroke-width="1.5"/></svg>
<div class="t" style="left:371px;top:698px;font-size:10.5px;color:#333">开启视频</div>
<svg style="left:420px;top:682px" width="8" height="6"><path d="M0 6H8L4 0Z" fill="#555"/></svg>
<svg style="left:449px;top:676px" width="24" height="20"><rect x="0.5" y="0.5" width="23" height="15" rx="1.5" fill="#4a4c50"/><path d="M7 19H17" stroke="#4a4c50" stroke-width="2"/><path d="M8 11.5C8.5 8.5 10.5 7 13.5 7V5L16.5 8L13.5 11V9C11 9 9.5 10 8 11.5Z" fill="#fff"/></svg>
<div class="t" style="left:440px;top:698px;font-size:10.5px;color:#333">共享屏幕</div>
<svg style="left:514px;top:674px" width="23" height="21"><circle cx="9" cy="5" r="4.3" fill="#4a4c50"/><path d="M0.5 19.5C0.5 14 4 10.5 9 10.5C11 10.5 12.5 11 13.5 12V19.5Z" fill="#4a4c50"/><circle cx="16.5" cy="14.5" r="5.5" fill="#4a4c50" stroke="#fafafa" stroke-width="1"/><path d="M16.5 11.5V17.5M13.5 14.5H19.5" stroke="#fff" stroke-width="1.6"/></svg>
<div class="t" style="left:514px;top:698px;font-size:10.5px;color:#333">邀请</div>
<svg style="left:572px;top:674px" width="22" height="21"><path d="M13.5 2.5C15 3.5 15.3 6 14 7.5" fill="none" stroke="#9a9b9d" stroke-width="0.8"/><path d="M16 10.5C17.5 12 18.5 15 18.5 19.5" fill="none" stroke="#a9aaac" stroke-width="0.9"/><circle cx="9.5" cy="4.8" r="3.9" fill="#4a4c50"/><path d="M0 19.7C0 13.5 4 9.5 9 9.5C14 9.5 18 13.5 18 19.7Z" fill="#4a4c50"/></svg>
<div class="t" style="left:561px;top:698px;font-size:10.5px;color:#333">成员(22)</div>
<svg style="left:629px;top:677px" width="19" height="18"><path d="M2 0H16.5C17.6 0 18.5 0.9 18.5 2V13C18.5 14.1 17.6 15 16.5 15V17.5L13 15H2C0.9 15 0 14.1 0 13V2C0 0.9 0.9 0 2 0Z" fill="#4a4c50"/><circle cx="4.5" cy="7" r="1.3" fill="#fff"/><circle cx="9" cy="7" r="1.3" fill="#fff"/><circle cx="13.5" cy="7" r="1.3" fill="#fff"/></svg>
<div class="a" style="left:641px;top:671px;width:19px;height:15px;background:#f50a0a;border-radius:7.5px"></div>
<div class="t" style="left:645px;top:673.5px;font-size:10.5px;color:#fff;font-weight:bold;letter-spacing:-0.5px">11</div>
<div class="t" style="left:628px;top:698px;font-size:10.5px;color:#333">聊天</div>
<svg style="left:691px;top:674px" width="21" height="21"><circle cx="10.5" cy="10.5" r="9.5" fill="none" stroke="#4a4c50" stroke-width="1.5"/><circle cx="10.5" cy="10.5" r="7" fill="#4a4c50"/></svg>
<svg style="left:713px;top:668px" width="20" height="20"><path d="M0 0H20V20Z" fill="#f78a2a"/><text x="7" y="8" font-size="5.5" font-family="Liberation Sans" fill="#fff" font-weight="bold" transform="rotate(45 10 6)">NEW</text></svg>
<div class="t" style="left:691px;top:698px;font-size:10.5px;color:#333">录制</div>
<svg style="left:754px;top:673px" width="22" height="22"><circle cx="11" cy="11" r="10.3" fill="#4a4c50"/><circle cx="7.5" cy="8" r="1.5" fill="#fff"/><circle cx="14.5" cy="8" r="1.5" fill="#fff"/><path d="M5 12H17C16.5 15.5 14 17.5 11 17.5C8 17.5 5.5 15.5 5 12Z" fill="#fff"/></svg>
<div class="t" style="left:754px;top:698px;font-size:10.5px;color:#333">表情</div>
<svg style="left:818px;top:681px" width="21" height="5"><circle cx="2.5" cy="2.5" r="2.2" fill="#4a4c50"/><circle cx="10.5" cy="2.5" r="2.2" fill="#4a4c50"/><circle cx="18.5" cy="2.5" r="2.2" fill="#4a4c50"/></svg>
<div class="a" style="left:842px;top:672.5px;width:7px;height:7px;background:#fb8a24;border-radius:50%"></div>
<div class="t" style="left:818px;top:698px;font-size:10.5px;color:#333">更多</div>
<div class="a" style="left:1168px;top:675px;width:71px;height:33px;border:1px solid #f26b6b;border-radius:3px;background:#fff"></div>
<div class="t" style="left:1180px;top:685px;font-size:12px;color:#e84c4c">离开会议</div>
</body></html>
